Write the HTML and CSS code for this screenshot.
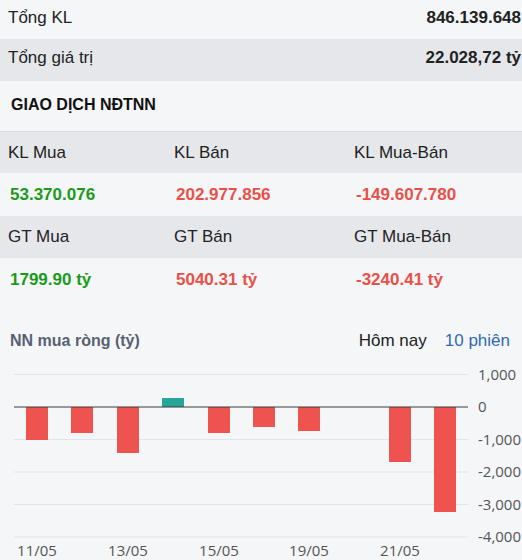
FILE: index.html
```html
<!DOCTYPE html>
<html lang="vi">
<head>
  <meta charset="UTF-8">
  <meta name="viewport" content="width=device-width, initial-scale=1.0">
  <title>Giao dịch NĐTNN</title>
  <link rel="stylesheet" href="styles.css">
</head>
<body>
  <div class="summary">
    <div class="sum-row first">
      <span>Tổng KL</span>
      <b>846.139.648</b>
    </div>
    <div class="sum-row alt">
      <span>Tổng giá trị</span>
      <b>22.028,72 tỷ</b>
    </div>
  </div>

  <h2 class="section-title">GIAO DỊCH NĐTNN</h2>

  <div class="foreign">
    <div class="f-row label-row top-line">
      <span>KL Mua</span>
      <span>KL Bán</span>
      <span>KL Mua-Bán</span>
    </div>
    <div class="f-row value-row">
      <b class="up">53.370.076</b>
      <b class="down">202.977.856</b>
      <b class="down">-149.607.780</b>
    </div>
    <div class="f-row label-row">
      <span>GT Mua</span>
      <span>GT Bán</span>
      <span>GT Mua-Bán</span>
    </div>
    <div class="f-row value-row last">
      <b class="up">1799.90 tỷ</b>
      <b class="down">5040.31 tỷ</b>
      <b class="down">-3240.41 tỷ</b>
    </div>
  </div>

  <div class="chart-head">
    <h3 class="chart-title">NN mua ròng (tỷ)</h3>
    <div class="tabs">
      <span class="tab">Hôm nay</span>
      <span class="tab active">10 phiên</span>
    </div>
  </div>

  <svg class="chart" width="522" height="200" viewBox="0 0 522 200">
    <!-- grid -->
    <g class="grid">
      <line x1="14" y1="14.5" x2="468" y2="14.5"/>
      <line x1="14" y1="79.5" x2="468" y2="79.5"/>
      <line x1="14" y1="112" x2="468" y2="112"/>
      <line x1="14" y1="144.5" x2="468" y2="144.5"/>
      <line x1="14" y1="177" x2="468" y2="177"/>
    </g>

    <!-- bars -->
    <g class="bars-down">
      <rect x="26" y="47" width="22" height="33"/>
      <rect x="71" y="47" width="22" height="26"/>
      <rect x="117" y="47" width="22" height="46"/>
      <rect x="208" y="47" width="22" height="26"/>
      <rect x="253" y="47" width="22" height="20"/>
      <rect x="298" y="47" width="22" height="24"/>
      <rect x="389" y="47" width="22" height="55"/>
      <rect x="434" y="47" width="22" height="105"/>
    </g>
    <rect class="bar-up" x="162" y="38" width="22" height="9"/>

    <line class="zero" x1="14" y1="47" x2="468" y2="47"/>

    <!-- y axis -->
    <g class="axis">
      <text x="478" y="19.5">1,000</text>
      <text x="478" y="52">0</text>
      <text x="478" y="84.5">-1,000</text>
      <text x="478" y="117">-2,000</text>
      <text x="478" y="149.5">-3,000</text>
      <text x="478" y="182">-4,000</text>
    </g>

    <!-- x axis -->
    <g class="axis dates">
      <text x="37" y="196">11/05</text>
      <text x="128" y="196">13/05</text>
      <text x="219" y="196">15/05</text>
      <text x="309" y="196">19/05</text>
      <text x="400" y="196">21/05</text>
    </g>
  </svg>
</body>
</html>
```

FILE: styles.css
```css
/* Page */
body {
  margin: 0;
  background: #f5f6f8;
  color: #222;
  font-family: "Liberation Sans", Arial, sans-serif;
  font-size: 17px;
  width: 522px;
  overflow: hidden;
}

/* Totals */
.sum-row {
  display: flex;
  justify-content: space-between;
  padding: 0 1px 4px 8px;
  height: 38px;
  line-height: 38px;
}

.sum-row.first {
  height: 35px;
  line-height: 35px;
}

.sum-row.alt {
  background: #e5e7eb;
}

.sum-row b {
  font-weight: bold;
}

.section-title {
  margin: 0;
  padding: 4px 0 6px 11px;
  height: 40px;
  line-height: 40px;
  font-size: 16px;
  font-weight: bold;
  color: #111;
}

/* Foreign trading grid */
.f-row {
  display: grid;
  grid-template-columns: 166px 180px 1fr;
  padding-left: 8px;
  height: 42px;
  line-height: 42px;
}

.label-row {
  background: #e5e7eb;
}

.top-line {
  height: 41px;
  border-top: 1px solid #d6d9de;
}

.value-row {
  height: 43px;
  line-height: 44px;
  padding-left: 10px;
}

.value-row.last {
  height: 42px;
  line-height: 43px;
}

.up {
  color: #1c9a1c;
}

.down {
  color: #e8504a;
}

/* Chart */
.chart-head {
  display: flex;
  justify-content: space-between;
  align-items: baseline;
  padding: 31px 12px 9px 10px;
  line-height: 20px;
}

.chart-title {
  margin: 0;
  font-size: 16px;
  font-weight: bold;
  color: #596171;
}

.tabs {
  display: flex;
  gap: 18px;
}

.tab {
  color: #222;
}

.tab.active {
  color: #2f6bb5;
}

.chart {
  display: block;
}

.grid line {
  stroke: #e1e3e7;
  stroke-width: 1;
}

.zero {
  stroke: #3a3a3a;
  stroke-width: 1;
}

.bars-down rect {
  fill: #ef5350;
}

.bar-up {
  fill: #26a69a;
}

.axis text {
  font-family: "Open Sans", "Noto Sans", sans-serif;
  font-size: 15px;
  fill: #555;
}

.dates text {
  text-anchor: middle;
}
```
